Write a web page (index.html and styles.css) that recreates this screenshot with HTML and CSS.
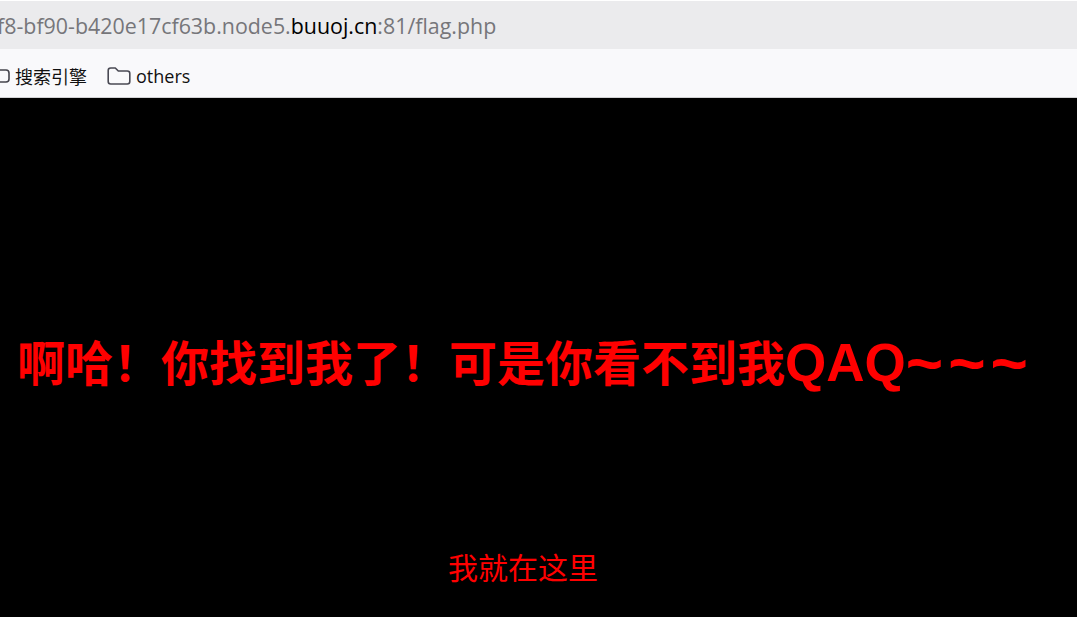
FILE: index.html
```html
<!DOCTYPE html>
<html lang="zh-CN">
<head>
<meta charset="utf-8">
<title>flag.php</title>
<link rel="stylesheet" href="styles.css">
</head>
<body>
<header class="chrome">
  <div class="url-bar"><span class="url"><span>f8-bf90-b420e17cf63b.node5.</span><span class="host">buuoj.cn</span><span>:81/flag.php</span></span></div>
  <nav class="bookmarks">
    <a class="bookmark first">
      <svg class="page-icon" width="14" height="16" viewBox="0 0 14 16"><rect x="1" y="2" width="12" height="12" rx="3" fill="none" stroke="#45454d" stroke-width="1.6"/></svg>
      <span>搜索引擎</span>
    </a>
    <a class="bookmark">
      <svg class="folder-icon" width="24" height="20" viewBox="0 0 24 20"><path d="M1.2 4.5a2.5 2.5 0 0 1 2.5-2.5h4.6l3 3h9a2.5 2.5 0 0 1 2.5 2.5v8a2.500 2.500 0 0 1-2.500 2.500H3.700a2.500 2.500 0 0 1-2.500-2.500z" fill="none" stroke="#4a4a54" stroke-width="1.6" stroke-linejoin="round"/></svg>
      <span>others</span>
    </a>
  </nav>
</header>
<main class="page">
  <h1 class="title">啊哈！你找到我了！可是你看不到我<span class="latin">QAQ</span><span class="tildes">~~~</span></h1>
  <p class="hint">我就在这里</p>
</main>
</body>
</html>
```
FILE: styles.css
```css
* { box-sizing: border-box; }
html, body { margin: 0; height: 100%; overflow: hidden; background: #000; }
body { display: flex; flex-direction: column; font-family: "Open Sans", "Noto Sans CJK SC", sans-serif; }
.chrome { flex: none; height: 98px; background: #fff; padding-top: 1px; border-bottom: 1px solid #d2d2d4; }
.url-bar { height: 48px; background: #ebebed; display: flex; align-items: center; overflow: hidden; }
.url { margin-left: -3px; font-size: 21.4px; color: #76767a; white-space: nowrap; }
.host { color: #000; }
.bookmarks { height: 48px; background: #f9f9fb; display: flex; align-items: center; gap: 20px; padding-top: 5px; font-size: 18px; color: #111; }
.bookmark { display: flex; align-items: center; gap: 5px; }
.first { margin-left: -4px; }
.page { flex: 1; width: 1046px; text-align: center; color: #f00; font-family: "Liberation Sans", "Noto Sans CJK SC", sans-serif; }
.title { margin: 238px 0 0; padding-left: 4px; font-size: 48px; line-height: 58px; font-weight: 700; white-space: nowrap; }
.latin { font-size: 53px; line-height: 0; }
.tildes { font-size: 64px; line-height: 0; letter-spacing: 5px; vertical-align: -4px; }
.hint { margin: 155px 0 0; font-size: 30px; line-height: 40px; }
```
